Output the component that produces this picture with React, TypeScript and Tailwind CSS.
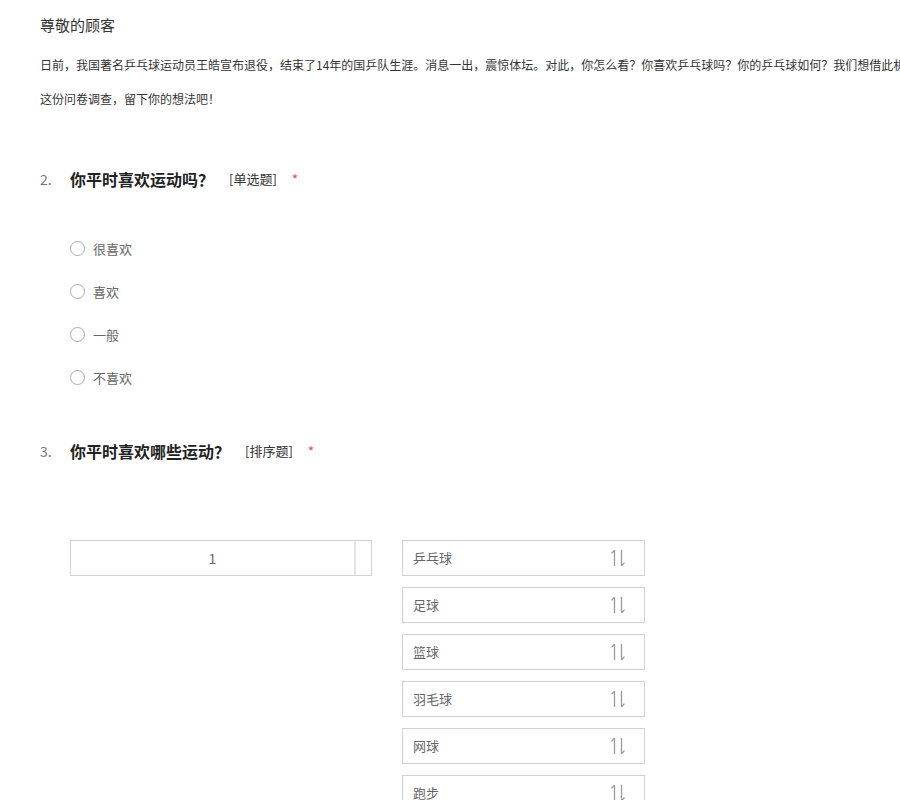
const font = { fontFamily: '"Noto Sans CJK SC", "Liberation Sans", sans-serif' };

const likeOptions = ["很喜欢", "喜欢", "一般", "不喜欢"];
const sports = ["乒乓球", "足球", "篮球", "羽毛球", "网球", "跑步"];

function SortIcon() {
  return (
    <svg width="16" height="20" viewBox="0 0 16 20" fill="none" stroke="#9a9a9a" strokeWidth="1.3">
      <path d="M4.5 2v16M4.5 2.2L1.5 5.4" />
      <path d="M11.5 2v16M11.5 17.8l3-3.2" />
    </svg>
  );
}

function QuestionHeader({ no, title, kind }: { no: string; title: string; kind: string }) {
  return (
    <div className="flex h-6 items-center">
      <span className="w-[30px] text-[14px] text-[#777]">{no}</span>
      <span className="text-[16px] font-bold text-[#222]">{title}</span>
      <span className="ml-[15px] text-[13px] text-[#333]">{kind}</span>
      <span className="ml-[15px] text-[14px] text-[#f05050]">*</span>
    </div>
  );
}

export default function App() {
  return (
    <div className="h-[800px] w-[900px] overflow-hidden bg-white pl-[40px] pt-[15px]" style={font}>
      <div className="h-5 text-[15px] leading-5 text-[#333]">尊敬的顾客</div>
      <div className="mt-[13px] whitespace-nowrap text-[12px] leading-[34px] text-[#333]">
        <div>
          日前，我国著名乒乓球运动员王皓宣布退役，结束了14年的国乒队生涯。消息一出，震惊体坛。对此，你怎么看？你喜欢乒乓球吗？你的乒乓球如何？我们想借此机会，通过
        </div>
        <div>这份问卷调查，留下你的想法吧！</div>
      </div>

      <div className="mt-[51px]">
        <QuestionHeader no="2." title="你平时喜欢运动吗？" kind="[单选题]" />
        <div className="mt-[36px] pl-[30px]">
          {likeOptions.map((o) => (
            <label key={o} className="flex h-[43px] items-center">
              <span className="h-[15px] w-[15px] rounded-full border border-[#aaa]" />
              <span className="ml-[8px] text-[13px] text-[#666]">{o}</span>
            </label>
          ))}
        </div>
      </div>

      <div className="mt-[40px]">
        <QuestionHeader no="3." title="你平时喜欢哪些运动？" kind="[排序题]" />
        <div className="mt-[77px] flex items-start pl-[30px]">
          <div className="flex h-[36px] w-[302px] border border-[#d2d2d2]">
            <div className="flex flex-1 items-center justify-center text-[14px] text-[#666]">1</div>
            <div className="w-[17px] border-l-2 border-[#e6e6e6]" />
          </div>
          <div className="ml-[30px] flex flex-col gap-[11px]">
            {sports.map((s) => (
              <div key={s} className="flex h-[36px] w-[243px] items-center justify-between border border-[#d2d2d2] pl-[10px] pr-[18px]">
                <span className="text-[13px] text-[#666]">{s}</span>
                <SortIcon />
              </div>
            ))}
          </div>
        </div>
      </div>
    </div>
  );
}
